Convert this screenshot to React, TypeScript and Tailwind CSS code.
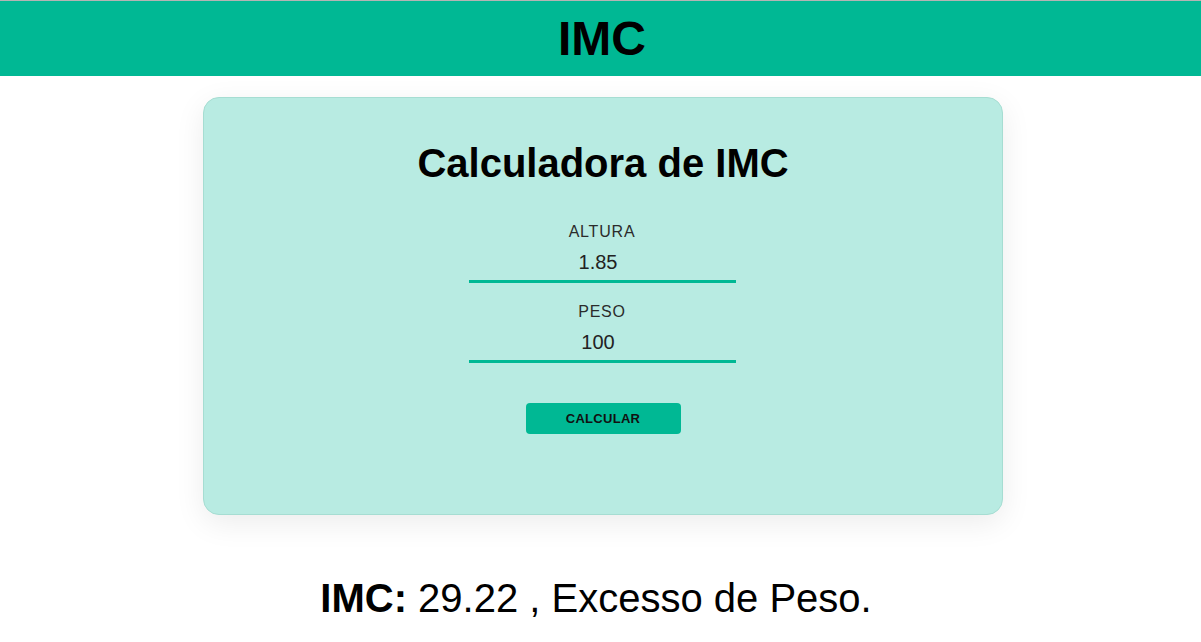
import { useState } from 'react'

export default function App() {
  const [altura, setAltura] = useState('1.85')
  const [peso, setPeso] = useState('100')

  return (
    <div className="min-h-screen bg-white font-['Liberation_Sans',Arial,sans-serif] text-black">
      {/* Header */}
      <header className="h-[76px] border-t border-[#b4b4b4] bg-[#00b894] flex items-center justify-center pl-[3px]">
        <h1 className="text-[48px] font-bold leading-none">IMC</h1>
      </header>

      {/* Card */}
      <div className="pl-[5px]">
        <div className="mt-[21px] mx-auto w-[800px] rounded-2xl border border-[#a6ddd2] bg-[#b8ebe2] shadow-[0_8px_30px_rgba(0,0,0,0.08)] pt-[45px] pb-[80px] flex flex-col items-center">
          <h2 className="text-[40px] font-bold leading-none">Calculadora de IMC</h2>

          <div className="mt-[41px] flex flex-col items-center gap-[21px] pr-[2px]">
            <Field label="ALTURA" value={altura} onChange={setAltura} />
            <Field label="PESO" value={peso} onChange={setPeso} />
          </div>

          <button className="mt-[40px] w-[155px] h-[31px] rounded bg-[#00b894] text-[13px] font-bold tracking-[0.3px] text-[#111]">
            CALCULAR
          </button>
        </div>
      </div>

      {/* Result */}
      <p className="mt-[63px] text-center text-[40px] leading-none pr-[9px]">
        <span className="font-bold">IMC:</span> 29.22 , Excesso de Peso.
      </p>
    </div>
  )
}

function Field({ label, value, onChange }: { label: string; value: string; onChange: (v: string) => void }) {
  return (
    <div className="flex flex-col items-center">
      <label className="text-[16px] leading-none tracking-wider text-[#2b2b2b]">{label}</label>
      <input
        value={value}
        onChange={(e) => onChange(e.target.value)}
        className="mt-[5px] w-[267px] h-[38px] pr-[8px] bg-transparent border-b-[3px] border-[#00b894] text-center text-[20px] text-[#222] outline-none"
      />
    </div>
  )
}
